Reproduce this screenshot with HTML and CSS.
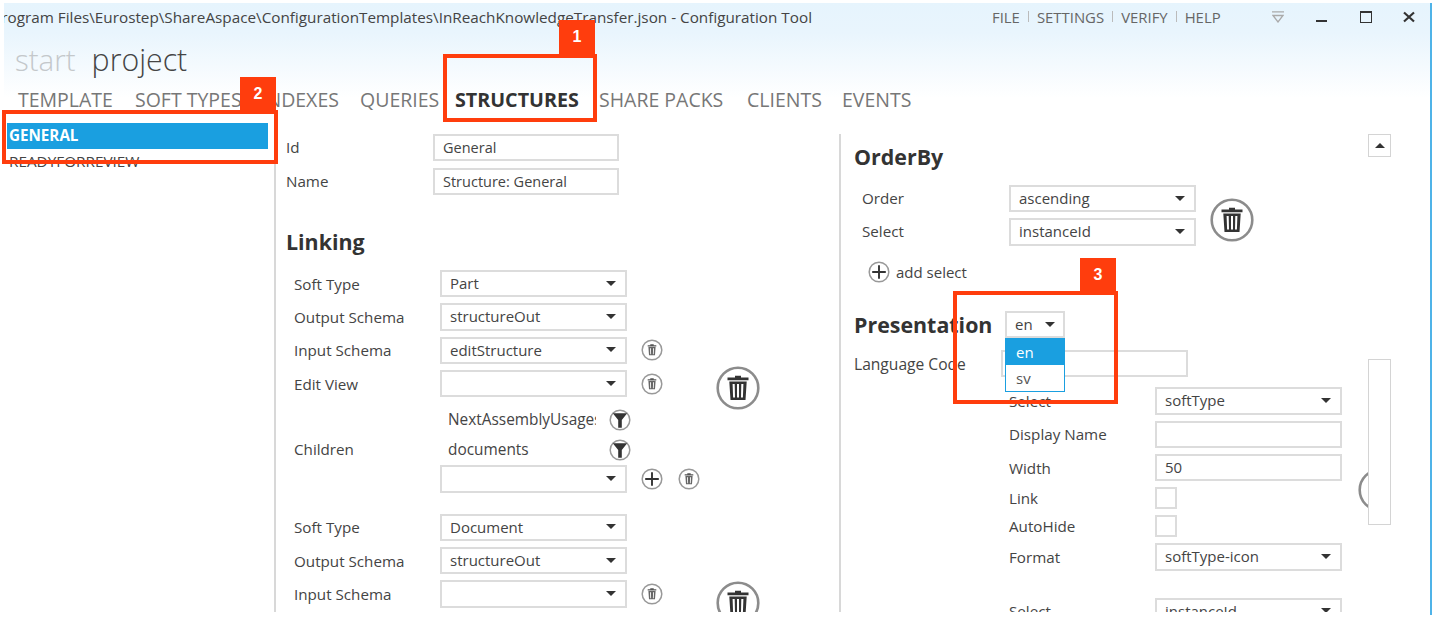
FILE: index.html
```html
<!DOCTYPE html>
<html lang="en">
<head>
<meta charset="utf-8">
<title>Configuration Tool</title>
<link rel="stylesheet" href="styles.css">
</head>
<body>
<svg class="defs" width="0" height="0" aria-hidden="true">
  <symbol id="trash" viewBox="0 0 44 44">
    <circle cx="22" cy="22" r="20.3" fill="#fff" stroke="#8c8c8c" stroke-width="2.6"/>
    <path d="M19 11.5V9.8h6v1.7h7.5v2.7h-21v-2.7z" fill="#333"/>
    <path fill-rule="evenodd" d="M13.3 15.6h17.4l-1.2 18.4h-15zM16.6 18l.5 13.6h1.9L18.7 18zM21 18v13.6h2V18zM25.3 18l-.3 13.6h1.9l.5-13.6z" fill="#333"/>
  </symbol>
  <symbol id="trash-sm" viewBox="0 0 22 22">
    <circle cx="11" cy="11" r="9.8" fill="#fff" stroke="#999" stroke-width="1.5"/>
    <path d="M9.3 5.2h3.4v1h2.6v1.3H6.700V6.200h2.600z" fill="#555"/>
    <path fill-rule="evenodd" d="M7.400 8h7.200l-.6 8.300H8zM9 9.200l.3 6h.8l-.2-6zM12.100 9.200l-.2 6h.8l.3-6z" fill="#666"/>
  </symbol>
  <symbol id="filter" viewBox="0 0 22 22">
    <circle cx="11" cy="11" r="9.800" fill="#fff" stroke="#999" stroke-width="1.500"/>
    <path d="M3.800 4.200h14.400l-5.400 6.800v7.800H9.200V11z" fill="#333"/>
  </symbol>
  <symbol id="plus" viewBox="0 0 22 22">
    <circle cx="11" cy="11" r="9.800" fill="#fff" stroke="#999" stroke-width="1.500"/>
    <path d="M11 4.200v13.600M4.200 11h13.600" fill="none" stroke="#333" stroke-width="1.900"/>
  </symbol>
  <symbol id="chevrons" viewBox="0 0 12 12">
    <path d="M0 .8h12M1 4.500h10L6 11z" fill="none" stroke="#aaa" stroke-width="1.300"/>
  </symbol>
  <symbol id="close" viewBox="0 0 12 12">
    <path d="M1 1.500l10 9M11 1.500l-10 9" fill="none" stroke="#333" stroke-width="2.200"/>
  </symbol>
</svg>

<div class="window">
  <header class="titlebar">
    <div class="title"><span>C:\Program Files\Eurostep\ShareAspace\ConfigurationTemplates\InReachKnowledgeTransfer.json - Configuration Tool</span></div>
    <nav class="menu">
      <span>FILE</span><i></i><span>SETTINGS</span><i></i><span>VERIFY</span><i></i><span>HELP</span>
    </nav>
    <svg class="chev"><use href="#chevrons"/></svg>
    <div class="winbtns">
      <span class="win-min"></span>
      <span class="win-max"></span>
      <svg class="win-close"><use href="#close"/></svg>
    </div>
  </header>

  <div class="brand"><span class="brand-off">start</span><span class="brand-on">project</span></div>

  <nav class="tabs">
    <span>TEMPLATE</span><span>SOFT TYPES</span><span>INDEXES</span><span>QUERIES</span>
    <span class="tab-active">STRUCTURES</span><span>SHARE PACKS</span><span>CLIENTS</span><span>EVENTS</span>
  </nav>

  <main class="body">
    <aside class="list">
      <div class="list-item selected">GENERAL</div>
      <div class="list-item">READYFORREVIEW</div>
    </aside>

    <section class="mid">
      <div class="row id-row"><label class="lbl-id">Id</label><div class="field f-id">General</div></div>
      <div class="row id-row"><label class="lbl-id">Name</label><div class="field f-id">Structure: General</div></div>

      <h2 class="heading linking">Linking</h2>

      <div class="group">
        <div class="rows">
          <div class="row"><label class="lbl">Soft Type</label><div class="field">Part<b class="arrow"></b></div></div>
          <div class="row"><label class="lbl">Output Schema</label><div class="field">structureOut<b class="arrow"></b></div></div>
          <div class="row"><label class="lbl">Input Schema</label><div class="field">editStructure<b class="arrow"></b></div><svg class="ic after"><use href="#trash-sm"/></svg></div>
          <div class="row"><label class="lbl">Edit View</label><div class="field"><b class="arrow"></b></div><svg class="ic after"><use href="#trash-sm"/></svg></div>
          <div class="children">
            <label class="lbl">Children</label>
            <div class="child-list">
              <div class="child"><span class="child-name">NextAssemblyUsages</span><svg class="ic"><use href="#filter"/></svg></div>
              <div class="child"><span class="child-name">documents</span><svg class="ic"><use href="#filter"/></svg></div>
              <div class="row"><div class="field"><b class="arrow"></b></div><svg class="ic after"><use href="#plus"/></svg><svg class="ic after2"><use href="#trash-sm"/></svg></div>
            </div>
          </div>
        </div>
        <svg class="ic-big big-a"><use href="#trash"/></svg>
      </div>

      <div class="group group-2">
        <div class="rows">
          <div class="row"><label class="lbl">Soft Type</label><div class="field">Document<b class="arrow"></b></div></div>
          <div class="row"><label class="lbl">Output Schema</label><div class="field">structureOut<b class="arrow"></b></div></div>
          <div class="row"><label class="lbl">Input Schema</label><div class="field"><b class="arrow"></b></div><svg class="ic after"><use href="#trash-sm"/></svg></div>
          <div class="row"><label class="lbl"></label><div class="field"></div></div>
        </div>
        <svg class="ic-big big-b"><use href="#trash"/></svg>
      </div>
    </section>

    <section class="right">
      <h2 class="heading">OrderBy</h2>
      <div class="order">
        <div class="order-rows">
          <div class="row"><label class="lbl-o">Order</label><div class="field">ascending<b class="arrow"></b></div></div>
          <div class="row"><label class="lbl-o">Select</label><div class="field">instanceId<b class="arrow"></b></div></div>
        </div>
        <svg class="ic-big big-o"><use href="#trash"/></svg>
      </div>
      <div class="add"><svg class="ic"><use href="#plus"/></svg><span>add select</span></div>

      <div class="pres">
        <h2 class="heading pres-h">Presentation</h2>
        <div class="lang">
          <div class="field f-lang">en<b class="arrow"></b></div>
          <ul class="drop"><li class="on">en</li><li>sv</li></ul>
        </div>
      </div>
      <div class="row code-row"><label class="lbl-code">Language Code</label><div class="field"></div></div>

      <div class="cols">
        <div class="col-rows">
          <div class="row"><label class="lbl">Select</label><div class="field">softType<b class="arrow"></b></div></div>
          <div class="row"><label class="lbl">Display Name</label><div class="field"></div></div>
          <div class="row"><label class="lbl">Width</label><div class="field">50</div></div>
          <div class="row r-check"><label class="lbl">Link</label><div class="check"></div></div>
          <div class="row r-check"><label class="lbl">AutoHide</label><div class="check"></div></div>
          <div class="row"><label class="lbl">Format</label><div class="field">softType-icon<b class="arrow"></b></div></div>
          <div class="row r-next"><label class="lbl">Select</label><div class="field">instanceId<b class="arrow"></b></div></div>
        </div>
        <div class="clip-c"><svg class="ic-big"><use href="#trash"/></svg></div>
      </div>

      <div class="scroll-up"><b></b></div>
      <div class="scroll-thumb"></div>
    </section>
  </main>
</div>

<div class="note-box box-1"></div><div class="badge badge-1">1</div>
<div class="note-box box-2"></div><div class="badge badge-2">2</div>
<div class="note-box box-3"></div><div class="badge badge-3">3</div>
</body>
</html>
```
FILE: styles.css
```css
* { box-sizing: border-box; }
html, body { margin: 0; height: 100%; }
body {
  position: relative;
  background: #fff;
  overflow: hidden;
  font-family: "Open Sans", "Noto Sans", sans-serif;
  font-size: 15px;
  color: #444;
}
.defs { position: absolute; }

.window {
  width: 1428px;
  height: 612px;
  margin: 3px 0 0 4px;
  border-right: 2px solid #4fb3e8;
  overflow: hidden;
  background: linear-gradient(#e6f4fd 0, #e9f5fd 30px, #fff 95px);
}

/* title bar */
.titlebar { display: flex; align-items: center; height: 27px; }
.title {
  display: flex;
  justify-content: flex-end;
  width: 808px;
  overflow: hidden;
  white-space: nowrap;
  font-size: 15.27px;
  color: #444;
}
.title span { flex: none; }
.menu {
  display: flex;
  align-items: center;
  flex: none;
  width: 231px;
  margin-left: 180px;
  font-size: 14.9px;
  color: #666;
}
.menu i { flex: none; width: 1px; height: 11px; margin: 0 8px; background: #bbb; }
.chev { flex: none; width: 12px; height: 12px; margin: 1px 0 0 49px; }
.winbtns { display: flex; align-items: center; margin-left: 32px; }
.win-min { width: 11px; height: 2px; margin-top: 9px; background: #333; }
.win-max { width: 12px; height: 12px; margin-left: 33px; border: 1px solid #333; border-top-width: 2px; }
.win-close { width: 12px; height: 12px; margin-left: 31px; }

/* brand and tabs */
.brand {
  display: flex;
  align-items: center;
  gap: 16px;
  height: 50px;
  padding: 8px 0 0 11px;
  font-size: 30.3px;
  font-weight: 300;
}
.brand-off { font-size: 29.500px; color: #c4c8cb; }
.brand-on { color: #444; }
.tabs {
  display: grid;
  grid-template-columns: 117px 126px 99px 95px 144px 148px 95px auto;
  align-items: center;
  height: 40px;
  padding: 0 0 2px 14px;
  font-size: 19.5px;
  color: #777;
  white-space: nowrap;
}
.tab-active { font-weight: 700; color: #333; font-size: 19.7px; }

/* main */
.body { display: flex; height: 492px; }
.list { flex: none; width: 272px; margin-top: 2px; padding-top: 1px; border-right: 2px solid #d8d8d8; }
.list-item { height: 26px; margin-left: 3px; width: 261px; padding-left: 2px; font-size: 15.3px; line-height: 25px; }
.list-item.selected { background: #1a9fe0; color: #fff; font-weight: 700; font-size: 15.2px; }

.mid { flex: none; width: 563px; padding: 14px 0 0 10px; overflow: hidden; }
.right {
  position: relative;
  flex: none;
  width: 591px;
  margin-top: 14px;
  padding: 8px 0 0 13px;
  border-left: 2px solid #d8d8d8;
  overflow: hidden;
}

.heading { height: 30px; margin: 0; font-size: 21.4px; line-height: 30px; font-weight: 700; color: #333; }
.linking { margin: 32px 0 13px; }

.row { display: flex; align-items: center; flex: none; }
.id-row { margin-bottom: 7px; }
.lbl-id { width: 147px; font-size: 15.2px; padding-bottom: 1px; }
.lbl { width: 146px; flex: none; font-size: 15.2px; }
.lbl-o { width: 147px; flex: none; font-size: 15.2px; padding-bottom: 1px; }
.lbl-code { width: 147px; flex: none; font-size: 15.6px; }

.field {
  display: flex;
  align-items: center;
  flex: none;
  width: 187px;
  height: 27.33px;
  padding: 0 0 1px 8px;
  border: 2px solid #dcdcdc;
  background: #fff;
}
.f-id { width: 186px; height: 27px; font-size: 14.5px; }
.arrow {
  width: 0;
  height: 0;
  margin-left: auto;
  margin-right: 9px;
  border-left: 5px solid transparent;
  border-right: 5px solid transparent;
  border-top: 5px solid #333;
}

.ic { flex: none; width: 22px; height: 22px; }
.ic-big { flex: none; width: 44px; height: 44px; }
.after { margin-left: 14px; }
.after2 { margin-left: 15px; }

.group { display: flex; padding-left: 8px; }
.group-2 { margin-top: 21px; }
.rows { display: flex; flex-direction: column; gap: 6px; width: 422px; flex: none; }
.big-a { margin-top: 96px; }
.big-b { margin-top: 67px; }

.children { display: flex; align-items: center; margin-top: 2px; }
.child-list { display: flex; flex-direction: column; }
.child { display: flex; align-items: center; height: 30px; padding-left: 8px; }
.child-name { width: 148px; margin: 0 13px 2px 0; overflow: hidden; white-space: nowrap; font-size: 15.4px; }

.order { display: flex; padding-left: 8px; margin-top: 13px; }
.order-rows { display: flex; flex-direction: column; gap: 6px; }
.big-o { margin: 13px 0 0 14px; }
.add { display: flex; align-items: center; gap: 6px; margin: 15px 0 0 14px; }

.pres { display: flex; align-items: center; margin-top: 27px; }
.pres-h { width: 151px; flex: none; }
.lang { position: relative; }
.f-lang { width: 60px; height: 27px; }
.f-lang .arrow { margin-right: 8px; }
.drop {
  position: absolute;
  z-index: 2;
  top: 27px;
  left: 0;
  width: 60px;
  margin: 0;
  padding: 0;
  list-style: none;
  border: 1px solid #1a9fe0;
  background: #fff;
}
.drop li { height: 26px; padding-left: 10px; line-height: 26px; color: #555; }
.drop li.on { background: #1a9fe0; color: #fff; }

.code-row { margin-top: 10.3px; }
.cols { display: flex; margin-top: 10px; padding-left: 155px; }
.col-rows { display: flex; flex-direction: column; gap: 6px; flex: none; width: 333px; }
.r-check { height: 22px; }
.check { width: 22px; height: 22px; border: 2px solid #dcdcdc; }
.r-next { margin-top: 21px; }
.clip-c { flex: none; width: 30px; height: 44px; margin: 81px 0 0 16px; overflow: hidden; }

.scroll-up {
  position: absolute;
  top: 0;
  left: 527px;
  display: flex;
  align-items: center;
  justify-content: center;
  width: 23px;
  height: 23px;
  border: 1px solid #d4d4d4;
  background: #fff;
}
.scroll-up b {
  width: 0;
  height: 0;
  border-left: 5px solid transparent;
  border-right: 5px solid transparent;
  border-bottom: 5px solid #333;
}
.scroll-thumb {
  position: absolute;
  top: 225px;
  left: 527px;
  width: 23px;
  height: 166px;
  border: 1px solid #d4d4d4;
  background: #fff;
}

/* call-out annotations laid over the screenshot */
.note-box { position: absolute; z-index: 5; border: 4px solid #ff3d0d; }
.box-1 { left: 443px; top: 54px; width: 154px; height: 68px; }
.box-2 { left: 2px; top: 110px; width: 276px; height: 54px; }
.box-3 { left: 953px; top: 291px; width: 165px; height: 113px; }
.badge {
  position: absolute;
  z-index: 6;
  width: 36px;
  height: 34px;
  background: #ff3d0d;
  color: #fff;
  font: 700 16px/34px "Liberation Sans", sans-serif;
  text-align: center;
}
.badge-1 { left: 559px; top: 20px; }
.badge-2 { left: 240px; top: 77px; }
.badge-3 { left: 1080px; top: 258px; }
```
